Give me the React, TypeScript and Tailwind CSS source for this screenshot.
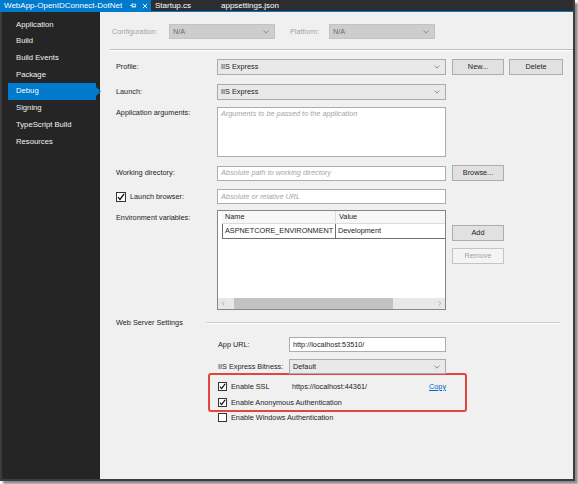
import React from "react";

const sidebarItems = [
  "Application",
  "Build",
  "Build Events",
  "Package",
  "Debug",
  "Signing",
  "TypeScript Build",
  "Resources",
];

function Chevron() {
  return (
    <svg width="6" height="4" viewBox="0 0 6 4" className="shrink-0">
      <path d="M0.6 0.6L3 3.2L5.4 0.6" fill="none" stroke="#7a7a7a" strokeWidth="0.8" />
    </svg>
  );
}

function Check({ checked }: { checked?: boolean }) {
  return (
    <span className="flex h-[9px] w-[9px] shrink-0 items-center justify-center border border-[#333333] bg-white">
      {checked && (
        <svg width="7" height="7" viewBox="0 0 7 7">
          <path d="M0.9 3.6L2.7 5.6L6.1 0.9" fill="none" stroke="#111111" strokeWidth="1.2" />
        </svg>
      )}
    </span>
  );
}

function Button({ label, disabled }: { label: string; disabled?: boolean }) {
  return (
    <div
      className={
        disabled
          ? "flex h-[16px] w-[52px] items-center justify-center border border-[#c4c4c4] bg-[#f4f4f4] text-[#a3a3a3]"
          : "flex h-[16px] w-[52px] items-center justify-center border border-[#adadad] bg-[#e1e1e1]"
      }
    >
      {label}
    </div>
  );
}

export default function App() {
  return (
    <div className="h-[484px] w-[578px] bg-white font-['Liberation_Sans',Arial,sans-serif]">
      <div className="flex h-[481px] w-[575px] flex-col border-r-2 border-b-2 border-[#3c3c3c] shadow-[3px_3px_2px_rgba(0,0,0,0.45)]">
        {/* document tabs */}
        <div className="flex h-[11px] shrink-0 bg-[#2d2d30] text-[8px] leading-none text-white">
          <div className="flex w-[151px] items-center bg-[#007acc] pl-[4px]">
            <span>WebApp-OpenIDConnect-DotNet</span>
            <svg width="7" height="7" viewBox="0 0 7 7" className="ml-auto">
              <path d="M0 3.5H2.2M2.2 1.4V5.6M2.2 2.2H5.6V4.8H2.2M3 4.8H5.6" fill="none" stroke="#ffffff" strokeWidth="0.8" />
            </svg>
            <svg width="6" height="6" viewBox="0 0 6 6" className="ml-[5px] mr-[3px]">
              <path d="M0.8 0.8L5.2 5.2M5.2 0.8L0.8 5.2" stroke="#ffffff" strokeWidth="0.9" />
            </svg>
          </div>
          <span className="ml-[4px] flex items-center">Startup.cs</span>
          <span className="ml-[30px] flex items-center">appsettings.json</span>
        </div>
        <div className="h-px shrink-0 bg-[#007acc]" />

        <div className="flex flex-1">
          {/* property pages sidebar */}
          <div className="w-[100px] shrink-0 border-l-2 border-[#3b3b3d] bg-[#252526] pt-[4px] text-[7.7px] text-[#f1f1f1]">
            {sidebarItems.map((item) =>
              item === "Debug" ? (
                <div key={item} className="relative ml-[6px] flex h-[17px] w-[88px] items-center bg-[#007acc] pl-[8px] text-white">
                  {item}
                  <svg width="5" height="9" viewBox="0 0 5 9" className="absolute right-[-5px] top-[4px]">
                    <path d="M0 0L5 4.5L0 9Z" fill="#007acc" />
                  </svg>
                </div>
              ) : (
                <div key={item} className="flex h-[16.7px] items-center pl-[14px]">
                  {item}
                </div>
              )
            )}
          </div>

          {/* debug page */}
          <div className="flex-1 bg-[#f0f0f0] text-[7.3px] leading-none text-[#1e1e1e]">
            <div className="ml-[12px] mt-[12px] flex h-[15px] items-center">
              <span className="w-[57px] text-[#a3a3a3]">Configuration:</span>
              <div className="flex h-[15px] w-[106px] items-center justify-between border border-[#c2c2c2] bg-[#cdcdcd] pl-[3px] pr-[5px] text-[#6e6e6e]">
                N/A
                <Chevron />
              </div>
              <span className="ml-[15px] w-[39px] text-[#a3a3a3]">Platform:</span>
              <div className="flex h-[15px] w-[106px] items-center justify-between border border-[#c2c2c2] bg-[#cdcdcd] pl-[3px] pr-[5px] text-[#6e6e6e]">
                N/A
                <Chevron />
              </div>
            </div>
            <div className="ml-[10px] mt-[10px] border-t border-b border-t-[#bcbcbc] border-b-white" />

            <div className="pl-[16px]">
              <div className="mt-[8px] flex items-center">
                <span className="w-[101px]">Profile:</span>
                <div className="flex h-[16px] w-[229px] items-center justify-between border border-[#acacac] bg-[#e9e9e9] pl-[3px] pr-[5px]">
                  IIS Express
                  <Chevron />
                </div>
                <div className="ml-[6px] flex gap-[5px]">
                  <Button label="New..." />
                  <div className="flex h-[16px] w-[54px] items-center justify-center border border-[#adadad] bg-[#e1e1e1]">Delete</div>
                </div>
              </div>

              <div className="mt-[9px] flex items-center">
                <span className="w-[101px]">Launch:</span>
                <div className="flex h-[16px] w-[229px] items-center justify-between border border-[#acacac] bg-[#e9e9e9] pl-[3px] pr-[5px]">
                  IIS Express
                  <Chevron />
                </div>
              </div>

              <div className="mt-[7px] flex items-start">
                <span className="w-[101px] pt-[2px]">Application arguments:</span>
                <div className="h-[50px] w-[229px] border border-[#abadb3] bg-white pl-[3px] pt-[2px] italic text-[#a5a5a5]">
                  Arguments to be passed to the application
                </div>
              </div>

              <div className="mt-[8px] flex items-center">
                <span className="w-[101px]">Working directory:</span>
                <div className="flex h-[15px] w-[229px] items-center border border-[#abadb3] bg-white pl-[3px] italic text-[#a5a5a5]">
                  Absolute path to working directory
                </div>
                <div className="ml-[6px]">
                  <Button label="Browse..." />
                </div>
              </div>

              <div className="mt-[8px] flex items-center">
                <div className="flex w-[101px] items-center gap-[4px]">
                  <span className="flex h-[10px] w-[10px] items-center justify-center border border-[#333333] bg-white">
                    <svg width="8" height="8" viewBox="0 0 8 8">
                      <path d="M1 4.1L3 6.4L7 1" fill="none" stroke="#111111" strokeWidth="1.3" />
                    </svg>
                  </span>
                  Launch browser:
                </div>
                <div className="flex h-[15px] w-[229px] items-center border border-[#abadb3] bg-white pl-[3px] italic text-[#a5a5a5]">
                  Absolute or relative URL
                </div>
              </div>

              <div className="mt-[6px] flex items-start">
                <span className="w-[101px] pt-[4px]">Environment variables:</span>
                <div className="flex h-[100px] w-[229px] flex-col border border-[#828790] bg-white">
                  <div className="ml-[4px] flex h-[13px] border-b border-[#dcdcdc] bg-[#f7f7f7]">
                    <div className="flex w-[114px] items-center border-r border-[#dcdcdc] pl-[3px]">Name</div>
                    <div className="flex items-center pl-[3px]">Value</div>
                  </div>
                  <div className="ml-[4px] flex h-[15px] border-b border-l border-[#6f6f6f]">
                    <div className="flex w-[113px] items-center border-r border-[#6f6f6f] pl-[2px]">ASPNETCORE_ENVIRONMENT</div>
                    <div className="flex items-center pl-[2px]">Development</div>
                  </div>
                  <div className="flex-1" />
                  <div className="flex h-[11px] items-center bg-[#e8e8e8] text-[#a0a0a0]">
                    <svg width="11" height="11" viewBox="0 0 11 11" className="shrink-0">
                      <path d="M6.3 3.4L4.2 5.5L6.3 7.6" fill="none" stroke="#a0a0a0" strokeWidth="0.8" />
                    </svg>
                    <div className="ml-[5px] h-[11px] w-[159px] bg-[#c2c2c2]" />
                    <div className="flex-1" />
                    <svg width="11" height="11" viewBox="0 0 11 11" className="shrink-0">
                      <path d="M4.7 3.4L6.8 5.5L4.7 7.6" fill="none" stroke="#a0a0a0" strokeWidth="0.8" />
                    </svg>
                  </div>
                </div>
                <div className="ml-[6px] flex flex-col gap-[7px] pt-[15px]">
                  <Button label="Add" />
                  <Button label="Remove" disabled />
                </div>
              </div>

              <div className="mt-[8px] flex h-[10px] items-center">
                <span className="w-[91px]">Web Server Settings</span>
                <div className="w-[353px] border-t border-b border-t-[#c9c9c9] border-b-white" />
              </div>

              <div className="pl-[102px]">
                <div className="mt-[9px] flex items-center">
                  <span className="w-[71px]">App URL:</span>
                  <div className="flex h-[15px] w-[157px] items-center border border-[#abadb3] bg-white pl-[3px]">
                    http://localhost:53510/
                  </div>
                </div>
                <div className="mt-[7px] flex items-center">
                  <span className="w-[71px]">IIS Express Bitness:</span>
                  <div className="flex h-[15px] w-[157px] items-center justify-between border border-[#acacac] bg-[#e9e9e9] pl-[3px] pr-[5px]">
                    Default
                    <Chevron />
                  </div>
                </div>
              </div>

              <div className="ml-[92px] mt-[-1px] flex h-[39px] w-[259px] flex-col gap-[7px] rounded-[3px] border-2 border-[#e5433d] pl-[8px] pt-[7px]">
                <div className="flex h-[9px] items-center">
                  <Check checked />
                  <span className="ml-[4px] w-[61px]">Enable SSL</span>
                  <span className="w-[137px]">https://localhost:44361/</span>
                  <span className="text-[#0066cc] underline">Copy</span>
                </div>
                <div className="flex h-[9px] items-center">
                  <Check checked />
                  <span className="ml-[4px]">Enable Anonymous Authentication</span>
                </div>
              </div>
              <div className="ml-[102px] mt-[1px] flex h-[9px] items-center">
                <Check />
                <span className="ml-[4px]">Enable Windows Authentication</span>
              </div>
            </div>
          </div>
        </div>
      </div>
    </div>
  );
}
